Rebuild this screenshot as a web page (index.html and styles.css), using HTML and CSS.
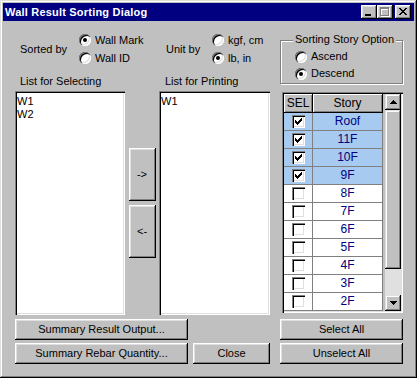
FILE: index.html
```html
<!DOCTYPE html>
<html>
<head>
<meta charset="utf-8">
<title>Wall Result Sorting Dialog</title>
<link rel="stylesheet" href="styles.css">
</head>
<body>
<div class="window">
  <div class="titlebar">
    <span class="title">Wall Result Sorting Dialog</span>
    <div class="tbtns">
      <div class="tbtn"><svg width="16" height="14" viewBox="0 0 16 14"><rect x="4" y="9" width="6" height="2" fill="#000"/></svg></div>
      <div class="tbtn"><svg width="16" height="14" viewBox="0 0 16 14"><path d="M4 3h9v9H4z M5 5v6h7V5z" fill="#fff"/><path d="M3 2h9v9H3z M4 4v6h7V4z" fill="#808080" fill-rule="evenodd"/></svg></div>
      <div class="tbtn close"><svg width="16" height="14" viewBox="0 0 16 14"><path transform="translate(4 3)" d="M0 0h2v1H0z M6 0h2v1H6z M1 1h2v1H1z M5 1h2v1H5z M2 2h4v1H2z M3 3h2v1H3z M2 4h4v1H2z M1 5h2v1H1z M5 5h2v1H5z M0 6h2v1H0z M6 6h2v1H6z" fill="#000"/></svg></div>
    </div>
  </div>
  <div class="content">
    <div class="leftpart">
      <div class="options">
        <div class="optgroup g1">
          <span class="optlabel l1">Sorted by</span>
          <div class="radios">
            <div class="radio-row"><span class="radio on"></span>Wall Mark</div>
            <div class="radio-row"><span class="radio"></span>Wall ID</div>
          </div>
        </div>
        <div class="optgroup g2">
          <span class="optlabel l2">Unit by</span>
          <div class="radios">
            <div class="radio-row"><span class="radio"></span>kgf, cm</div>
            <div class="radio-row"><span class="radio on"></span>lb, in</div>
          </div>
        </div>
      </div>
      <div class="lists">
        <div class="listcol lc1">
          <div class="caption">List for Selecting</div>
          <div class="listbox"><div>W1</div><div>W2</div></div>
        </div>
        <div class="midcol">
          <div class="btn arrow">-&gt;</div>
          <div class="btn arrow">&lt;-</div>
        </div>
        <div class="listcol lc2">
          <div class="caption c2">List for Printing</div>
          <div class="listbox"><div>W1</div></div>
        </div>
      </div>
      <div class="bottom">
        <div class="brow"><div class="btn wide">Summary Result Output...</div></div>
        <div class="brow"><div class="btn wide">Summary Rebar Quantity...</div><div class="btn close-btn">Close</div></div>
      </div>
    </div>
    <div class="rightcol">
      <div class="groupbox">
        <span class="legend">Sorting Story Option</span>
        <div class="radio-row g"><span class="radio"></span>Ascend</div>
        <div class="radio-row g"><span class="radio on"></span>Descend</div>
      </div>
      <div class="grid">
        <div class="table">
          <div class="row hrow"><div class="hcell sel">SEL</div><div class="hcell story">Story</div></div>
          <div class="row on"><div class="cell sel"><span class="chk"><svg width="7" height="7" viewBox="0 0 7 7"><path d="M6 0h1v1H6z M5 1h2v1H5z M0 2h1v1H0z M4 2h3v1H4z M0 3h2v1H0z M3 3h3v1H3z M0 4h5v1H0z M1 5h3v1H1z M2 6h1v1H2z"/></svg></span></div><div class="cell story">Roof</div></div>
          <div class="row on"><div class="cell sel"><span class="chk"><svg width="7" height="7" viewBox="0 0 7 7"><path d="M6 0h1v1H6z M5 1h2v1H5z M0 2h1v1H0z M4 2h3v1H4z M0 3h2v1H0z M3 3h3v1H3z M0 4h5v1H0z M1 5h3v1H1z M2 6h1v1H2z"/></svg></span></div><div class="cell story">11F</div></div>
          <div class="row on"><div class="cell sel"><span class="chk"><svg width="7" height="7" viewBox="0 0 7 7"><path d="M6 0h1v1H6z M5 1h2v1H5z M0 2h1v1H0z M4 2h3v1H4z M0 3h2v1H0z M3 3h3v1H3z M0 4h5v1H0z M1 5h3v1H1z M2 6h1v1H2z"/></svg></span></div><div class="cell story">10F</div></div>
          <div class="row on"><div class="cell sel"><span class="chk"><svg width="7" height="7" viewBox="0 0 7 7"><path d="M6 0h1v1H6z M5 1h2v1H5z M0 2h1v1H0z M4 2h3v1H4z M0 3h2v1H0z M3 3h3v1H3z M0 4h5v1H0z M1 5h3v1H1z M2 6h1v1H2z"/></svg></span></div><div class="cell story">9F</div></div>
          <div class="row"><div class="cell sel"><span class="chk"></span></div><div class="cell story">8F</div></div>
          <div class="row"><div class="cell sel"><span class="chk"></span></div><div class="cell story">7F</div></div>
          <div class="row"><div class="cell sel"><span class="chk"></span></div><div class="cell story">6F</div></div>
          <div class="row"><div class="cell sel"><span class="chk"></span></div><div class="cell story">5F</div></div>
          <div class="row"><div class="cell sel"><span class="chk"></span></div><div class="cell story">4F</div></div>
          <div class="row"><div class="cell sel"><span class="chk"></span></div><div class="cell story">3F</div></div>
          <div class="row"><div class="cell sel"><span class="chk"></span></div><div class="cell story">2F</div></div>
        </div>
        <div class="scrollbar">
          <div class="sbtn"><svg width="7" height="4" viewBox="0 0 7 4"><path d="M3 0h1v1H3z M2 1h3v1H2z M1 2h5v1H1z M0 3h7v1H0z"/></svg></div>
          <div class="thumb"></div>
          <div class="track"></div>
          <div class="sbtn"><svg width="7" height="4" viewBox="0 0 7 4"><path d="M0 0h7v1H0z M1 1h5v1H1z M2 2h3v1H2z M3 3h1v1H3z"/></svg></div>
        </div>
      </div>
      <div class="rbtns">
        <div class="btn">Select All</div>
        <div class="btn">Unselect All</div>
      </div>
    </div>
  </div>
</div>
</body>
</html>
```

FILE: styles.css
```css
* { box-sizing: border-box; margin: 0; padding: 0; }
html, body { width: 417px; height: 378px; overflow: hidden; background: #c0c0c0; }
body {
  font-family: "Liberation Sans", Arial, sans-serif;
  font-size: 11px;
  line-height: 13px;
  color: #000;
}
.window {
  width: 417px;
  height: 378px;
  padding: 3px;
  background: #c0c0c0;
  box-shadow: inset -1px -1px #000, inset 1px 1px #dfdfdf, inset -2px -2px #808080, inset 2px 2px #fff;
  display: flex;
  flex-direction: column;
}
.titlebar {
  height: 18px;
  flex: none;
  background: #000080;
  display: flex;
  align-items: center;
  justify-content: space-between;
  padding: 0 3px 0 2px;
}
.title { color: #fff; font-weight: bold; letter-spacing: 0.2px; }
.tbtns { display: flex; align-items: center; }
.tbtn {
  width: 16px;
  height: 14px;
  background: #c0c0c0;
  box-shadow: inset -1px -1px #000, inset 1px 1px #fff, inset -2px -2px #808080, inset 2px 2px #dfdfdf;
  display: flex;
}
.tbtn svg { display: block; }
.tbtn.close { margin-left: 2px; }

.content { display: flex; padding: 0 11px 0 12px; flex: 1; }
.leftpart { width: 255px; margin-right: 10px; display: flex; flex-direction: column; }
.rightcol { width: 123px; display: flex; flex-direction: column; }

.options { display: flex; margin-top: 10px; height: 36px; }
.optgroup { display: flex; align-items: center; }
.g1 { padding-left: 5px; width: 151px; }
.l1 { width: 59px; }
.l2 { width: 46px; }
.radios { display: flex; flex-direction: column; }
.radio-row { height: 18px; display: flex; align-items: center; gap: 4px; white-space: nowrap; }
.radio {
  width: 12px;
  height: 12px;
  border-radius: 50%;
  background: #fff;
  box-shadow: inset 1px 1px #808080, inset 2px 2px #000, inset -1px -1px #fff, inset -2px -2px #dfdfdf;
  display: flex;
  align-items: center;
  justify-content: center;
  flex: none;
}
.radio.on::after {
  content: "";
  width: 4px;
  height: 4px;
  border-radius: 50%;
  background: #000;
}

.lists { display: flex; margin-top: 8px; }
.listcol { display: flex; flex-direction: column; }
.lc1 { width: 110px; }
.lc2 { width: 111px; }
.caption { padding-left: 5px; height: 13px; margin-bottom: 3px; white-space: nowrap; }
.caption.c2 { padding-left: 6px; }
.listbox {
  height: 224px;
  background: #fff;
  padding: 4px 2px;
  box-shadow: inset 1px 1px #808080, inset 2px 2px #000, inset -1px -1px #fff, inset -2px -2px #dfdfdf;
}
.midcol {
  width: 34px;
  padding-top: 73px;
  display: flex;
  flex-direction: column;
  align-items: center;
  gap: 4px;
}

.btn {
  height: 21px;
  background: #c0c0c0;
  box-shadow: inset -1px -1px #000, inset 1px 1px #fff, inset -2px -2px #808080, inset 2px 2px #dfdfdf;
  display: flex;
  align-items: center;
  justify-content: center;
  white-space: nowrap;
}
.btn.arrow { width: 27px; height: 53px; }
.bottom { display: flex; flex-direction: column; gap: 3px; margin-top: 4px; }
.brow { display: flex; gap: 5px; }
.btn.wide { width: 173px; }
.btn.close-btn { width: 77px; }

.groupbox {
  margin-top: 19px;
  height: 44px;
  border: 1px solid #808080;
  box-shadow: inset 1px 1px #fff, 1px 1px #fff;
  padding-left: 14px;
}
.legend {
  display: block;
  width: fit-content;
  margin: -8px 0 0 -2px;
  padding: 0 2px;
  background: #c0c0c0;
  white-space: nowrap;
}
.radio-row.g { height: 17px; }
.legend + .radio-row.g { margin-top: 2px; }

.grid {
  margin: 8px 0 0 2px;
  width: 121px;
  height: 221px;
  padding: 2px;
  background: #c0c0c0;
  box-shadow: inset 1px 1px #808080, inset 2px 2px #000, inset -1px -1px #fff, inset -2px -2px #dfdfdf;
  display: flex;
}
.table { width: 99px; display: flex; flex-direction: column; font-size: 12px; }
.row { display: flex; height: 18px; background: #fff; }
.row.on { background: #a6caf0; }
.row.hrow { height: 19px; background: #c0c0c0; }
.cell, .hcell {
  display: flex;
  align-items: center;
  justify-content: center;
  border-right: 1px solid #808080;
  border-bottom: 1px solid #808080;
}
.cell.story { color: #000080; }
.hcell {
  border-color: #000;
  box-shadow: inset 1px 1px #fff, inset -1px -1px #808080;
}
.sel { width: 29px; }
.story { width: 70px; }
.chk {
  width: 13px;
  height: 13px;
  background: #fff;
  box-shadow: inset 1px 1px #808080, inset 2px 2px #000, inset -1px -1px #fff, inset -2px -2px #dfdfdf;
  display: flex;
  align-items: center;
  justify-content: center;
}
.chk svg { display: block; fill: #000; }

.scrollbar { width: 16px; margin-left: 2px; display: flex; flex-direction: column; }
.sbtn {
  height: 16px;
  flex: none;
  background: #c0c0c0;
  box-shadow: inset -1px -1px #000, inset 1px 1px #dfdfdf, inset -2px -2px #808080, inset 2px 2px #fff;
  display: flex;
  align-items: center;
  justify-content: center;
}
.sbtn svg { display: block; fill: #000; }
.thumb {
  height: 159px;
  flex: none;
  background: #c0c0c0;
  box-shadow: inset -1px -1px #000, inset 1px 1px #dfdfdf, inset -2px -2px #808080, inset 2px 2px #fff;
}
.track { flex: 1; background: #e0e0e0; }

.rbtns { display: flex; flex-direction: column; gap: 3px; margin-top: 6px; }
.rbtns .btn { width: 123px; }
```
